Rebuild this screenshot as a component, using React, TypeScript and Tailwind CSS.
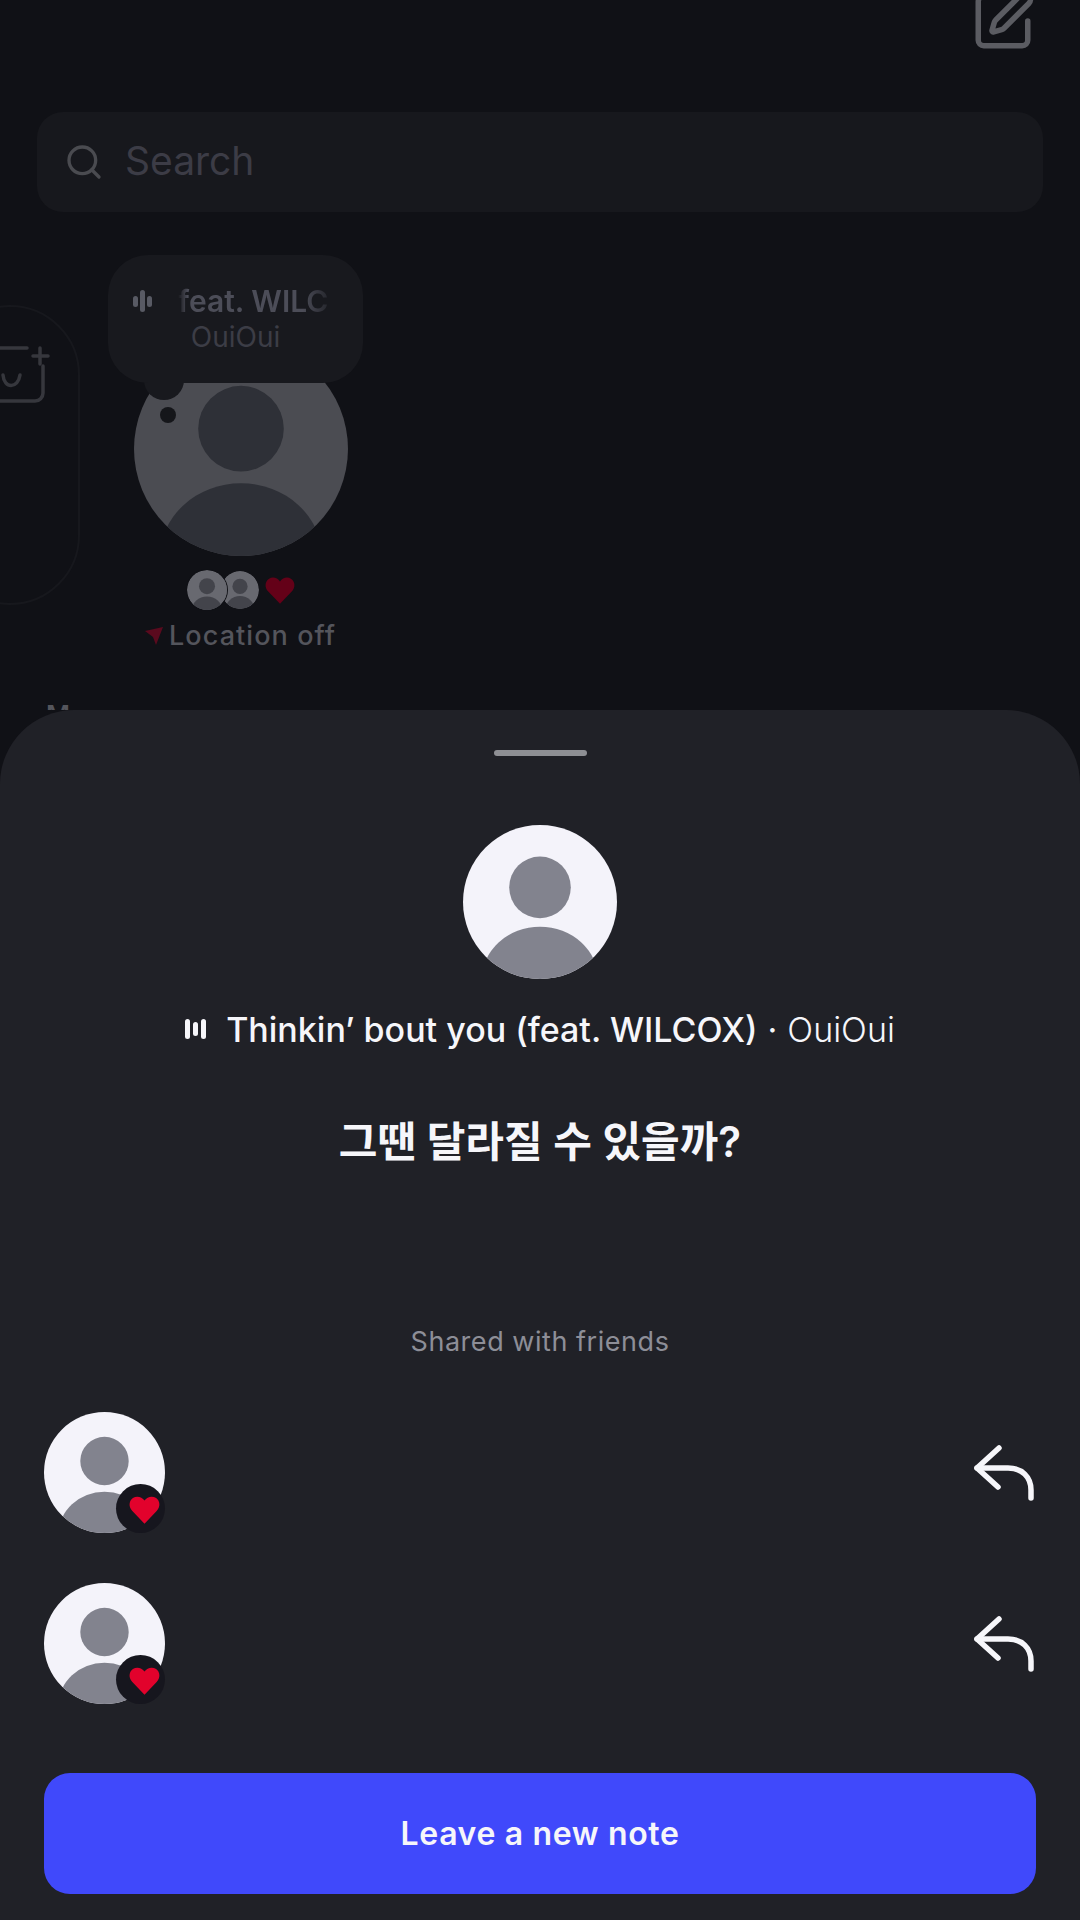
import { Search, SquarePen } from 'lucide-react';

function Avatar({ className, bg = '#f4f3fa', fg = '#82838e' }: { className: string; bg?: string; fg?: string }) {
  return (
    <svg viewBox="0 0 100 100" className={className}>
      <defs>
        <clipPath id="avatar-clip">
          <circle cx="50" cy="50" r="50" />
        </clipPath>
      </defs>
      <circle cx="50" cy="50" r="50" fill={bg} />
      <g clipPath="url(#avatar-clip)" fill={fg}>
        <circle cx="50" cy="40.500" r="20" />
        <ellipse cx="50" cy="101" rx="38" ry="35" />
      </g>
    </svg>
  );
}

function Heart({ className, color = '#e2022c' }: { className: string; color?: string }) {
  return (
    <svg viewBox="0 0 24 24" className={className}>
      <path
        fill={color}
        d="M12 23 2.600 13.200C-.6 9.800 0 5.200 3 3.100c3-2 6.900-1.100 9 2 2.100-3.100 6-4 9-2 3 2.100 3.600 6.700.4 10.100L12 23z"
      />
    </svg>
  );
}

function ReplyArrow() {
  return (
    <svg viewBox="0 0 62 56" className="w-[62px] h-[56px]" fill="none" stroke="#f6f6fa" strokeWidth="5.500" strokeLinecap="round" strokeLinejoin="round">
      <path d="M26 3 4 23l21 19" />
      <path d="M4 23h31c14 0 23 9 23 22v8" />
    </svg>
  );
}

function EqBars({ className, color, bars }: { className: string; color: string; bars: number[] }) {
  return (
    <div className={className}>
      {bars.map((h, i) => (
        <span key={i} className="w-[5px] rounded-full" style={{ height: h, backgroundColor: color }} />
      ))}
    </div>
  );
}

function FriendRow() {
  return (
    <div className="flex items-center justify-between h-[121px]">
      <div className="relative w-[121px] h-[121px]">
        <Avatar className="w-[121px] h-[121px]" />
        <div className="absolute left-[72px] top-[72px] w-[49px] h-[49px] rounded-full bg-[#16161e] flex items-center justify-center">
          <Heart className="w-[33px] h-[31px] ml-[7px] mt-px" />
        </div>
      </div>
      <div className="mr-[1px]">
        <ReplyArrow />
      </div>
    </div>
  );
}

export default function App() {
  return (
    <div className="w-[1080px] h-[1920px] bg-[#101116] overflow-hidden font-['Inter','Noto_Sans_CJK_KR',sans-serif]">
      {/* dimmed list behind the sheet */}
      <div className="relative h-[710px] overflow-hidden">
        <div className="flex justify-end h-[52px] pr-[44px] items-end">
          <SquarePen className="w-[66px] h-[66px] text-[#5b5c62] -mb-[2px]" strokeWidth={2} />
        </div>
        <div className="mt-[60px] mx-[37px] h-[100px] rounded-[26px] bg-[#17181d] flex items-center pl-[27px] gap-[21px]">
          <Search className="w-[40px] h-[40px] text-[#4a4b50]" strokeWidth={2} />
          <span className="text-[39px] leading-none text-[#3c3c46] -mt-[3px]">Search</span>
        </div>

        <div className="flex mt-[43px]">
          {/* add-note card, cut off at the left edge */}
          <div className="relative w-[140px] h-[300px] mt-[50px] -ml-[60px] rounded-[70px] border-2 border-[#17181d] shrink-0">
            <svg viewBox="0 0 50 60" className="absolute left-[58px] top-[38px] w-[50px] h-[60px]" fill="none" stroke="#36373d" strokeWidth="3.500" strokeLinecap="round">
              <path d="M27 3H0M43 21v27a8 8 0 0 1-8 8H0" />
              <path d="M40 3v16M33 11h15" />
              <path d="M3 30c1 14 15 14 17 0" />
            </svg>
          </div>

          <div className="relative w-[330px] ml-[28px] h-[400px]">
            <Avatar className="absolute left-[26px] top-[87px] w-[214px] h-[214px]" bg="#4b4c52" fg="#2e3037" />
            <span className="absolute left-[52px] top-[152px] w-[16px] h-[16px] rounded-full bg-[#15161a]" />
            <span className="absolute left-[36px] top-[105px] w-[40px] h-[40px] rounded-full bg-[#18191e]" />
            <div className="absolute left-0 top-0 w-[255px] h-[128px] rounded-[40px] bg-[#18191e] flex flex-col items-center pt-[29px]">
              <div className="flex items-center w-[205px] gap-[26px]">
                <EqBars className="flex items-center gap-[2px]" color="#585a64" bars={[11, 22, 11]} />
                <span className="text-[30px] leading-[34px] font-semibold text-[#4c4d58] whitespace-nowrap overflow-hidden w-[160px] [mask-image:linear-gradient(90deg,transparent,black_6%,black_78%,transparent)]">feat. WILC</span>
              </div>
              <span className="text-[28px] leading-[34px] text-[#3c3d46] mt-[2px]">OuiOui</span>
            </div>
            <div className="absolute left-[79px] top-[315px] flex items-center">
              <Avatar className="relative z-10 w-[40px] h-[40px] rounded-full ring-1 ring-[#101116]" bg="#686970" fg="#43444b" />
              <Avatar className="w-[38px] h-[38px] -ml-[6px] rounded-full" bg="#686970" fg="#43444b" />
              <Heart className="w-[32px] h-[30px] ml-[5px]" color="#640118" />
            </div>
            <div className="absolute left-[36px] top-[365px] flex items-center gap-[5px]">
              <svg viewBox="0 0 20 20" className="w-[20px] h-[22px]">
                <path fill="#5a0a1e" d="M1 5 19 1l-7 18-3-8z" />
              </svg>
              <span className="text-[27px] leading-[32px] font-medium tracking-[0.04em] text-[#54555c]">Location off</span>
            </div>
          </div>
        </div>
        <span className="absolute left-[46px] top-[702px] text-[26px] leading-none font-semibold text-[#54555c]">M</span>
      </div>

      {/* bottom sheet */}
      <div className="h-[1210px] bg-[#202127] rounded-t-[74px] px-[44px] flex flex-col">
        <div className="self-center mt-[40px] w-[93px] h-[6px] rounded-full bg-[#8e8f94]" />
        <Avatar className="self-center mt-[69px] w-[154px] h-[154px]" />

        <div className="flex items-center justify-center mt-[30px] h-[40px] text-[34px] text-[#f6f6fa] whitespace-nowrap">
          <EqBars className="flex items-center gap-[3px] mr-[20px]" color="#f6f6fa" bars={[20, 14, 20]} />
          <span className="font-medium">Thinkin’ bout you (feat. WILCOX)</span>
          <span className="mx-[10px]">·</span>
          <span className="font-light">OuiOui</span>
        </div>

        <p className="mt-[63px] text-center text-[42px] leading-[60px] font-semibold text-[#f6f6fa]">그땐 달라질 수 있을까?</p>

        <p className="mt-[152px] text-center text-[27px] leading-[36px] tracking-[0.02em] text-[#8d8e97]">Shared with friends</p>

        <div className="mt-[52px] flex flex-col gap-[50px]">
          <FriendRow />
          <FriendRow />
        </div>

        <button className="mt-[69px] h-[121px] rounded-[26px] bg-[#4049fb] text-[32px] font-semibold tracking-[0.02em] text-[#f6f6fa]">
          Leave a new note
        </button>
      </div>
    </div>
  );
}
